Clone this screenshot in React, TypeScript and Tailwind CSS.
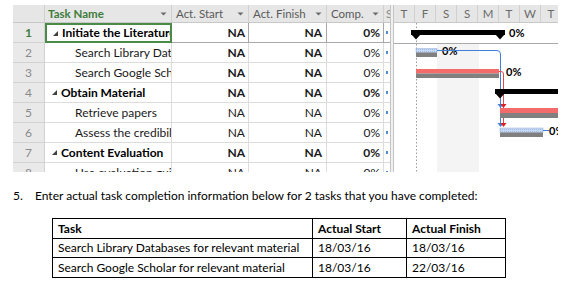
import React from "react";

const FONT = "font-['Lato','Liberation_Sans',sans-serif]";

type Row = { n: number; name: string; sub?: boolean; bold?: boolean; naBold?: boolean };
const rows: Row[] = [
  { n: 1, name: "Initiate the Literature Review", bold: true, naBold: true },
  { n: 2, name: "Search Library Databases", sub: true, naBold: true },
  { n: 3, name: "Search Google Scholar", sub: true, naBold: true },
  { n: 4, name: "Obtain Material", bold: true, naBold: true },
  { n: 5, name: "Retrieve papers", sub: true },
  { n: 6, name: "Assess the credibility", sub: true },
  { n: 7, name: "Content Evaluation", bold: true, naBold: true },
  { n: 8, name: "Use evaluation guide", sub: true },
];

const days = ["T", "F", "S", "S", "M", "T", "W", "T"];

function Caret() {
  return (
    <svg width="7" height="4" viewBox="0 0 7 4" className="shrink-0">
      <path d="M0.5 0.5 L6.5 0.5 L3.5 3.5 Z" fill="#6b6b6b" />
    </svg>
  );
}

function Collapse() {
  return (
    <svg width="5" height="5" viewBox="0 0 5 5" className="shrink-0">
      <path d="M5 0 L5 5 L0 5 Z" fill="#404040" />
    </svg>
  );
}

function Timeline() {
  // coordinates relative to x=394, y=23
  const X = (x: number) => x - 394;
  const Y = (y: number) => y - 23;
  return (
    <svg width="164" height="149" className="block shrink-0">
      <defs>
        <pattern id="dots" width="2" height="2" patternUnits="userSpaceOnUse">
          <rect width="2" height="2" fill="#c9daf2" />
          <rect width="1" height="1" fill="#9dbbe6" />
        </pattern>
      </defs>
      <rect x={X(437)} y={Y(44)} width="42" height="130" fill="#f4f4f4" />
      <line x1="0" x2="164" y1={Y(43.5)} y2={Y(43.5)} stroke="#a9a9a9" strokeWidth="1" />
      <line x1={X(416.5)} x2={X(416.5)} y1="0" y2="149" stroke="#9a9a9a" strokeWidth="1" strokeDasharray="1.5 2" />

      {/* row 1 summary */}
      <rect x={X(411)} y={Y(30)} width={94} height={5} fill="#000" />
      <path d={`M${X(411)} ${Y(34)} L${X(421)} ${Y(34)} L${X(416)} ${Y(39.5)} Z`} fill="#000" />
      <path d={`M${X(495)} ${Y(34)} L${X(505)} ${Y(34)} L${X(500)} ${Y(39.5)} Z`} fill="#000" />
      <text x={X(509)} y={Y(37)} fontSize="11" fontWeight="700" fill="#000" fontFamily="Lato, sans-serif">0%</text>

      {/* links */}
      <path d={`M${X(437)} ${Y(50.5)} L${X(497)} ${Y(50.5)} Q${X(500.5)} ${Y(50.5)} ${X(500.5)} ${Y(54)} L${X(500.5)} ${Y(126)}`} fill="none" stroke="#3f7fd8" strokeWidth="1" />
      <path d={`M${X(499)} ${Y(71.5)} L${X(501)} ${Y(71.5)} Q${X(503.5)} ${Y(71.5)} ${X(503.5)} ${Y(74)} L${X(503.5)} ${Y(126)}`} fill="none" stroke="#e24848" strokeWidth="1" />

      {/* row 2 */}
      <text x={X(442)} y={Y(55)} fontSize="11" fontWeight="700" fill="#000" fontFamily="Lato, sans-serif">0%</text>
      <line x1={X(437)} x2={X(460)} y1={Y(50.5)} y2={Y(50.5)} stroke="#3f7fd8" strokeWidth="1" />
      <rect x={X(416)} y={Y(48.5)} width={21} height={4} fill="url(#dots)" stroke="#8fb0e0" strokeWidth="0.5" />
      <rect x={X(416)} y={Y(52.5)} width={21} height={4.5} fill="#808080" />

      {/* row 3 */}
      <rect x={X(416)} y={Y(69)} width={83} height={4.5} fill="#f46b6b" />
      <rect x={X(416)} y={Y(73.5)} width={83} height={4.5} fill="#808080" />
      <text x={X(506)} y={Y(76)} fontSize="11" fontWeight="700" fill="#000" fontFamily="Lato, sans-serif">0%</text>

      {/* row 4 summary */}
      <rect x={X(495)} y={Y(89)} width={80} height={5} fill="#000" />
      <path d={`M${X(495)} ${Y(93)} L${X(505)} ${Y(93)} L${X(500)} ${Y(98.5)} Z`} fill="#000" />

      {/* arrows row 5 */}
      <path d={`M${X(497.5)} ${Y(104)} L${X(503.5)} ${Y(104)} L${X(500.5)} ${Y(108)} Z`} fill="#3f7fd8" />
      <path d={`M${X(500.5)} ${Y(104)} L${X(506.5)} ${Y(104)} L${X(503.5)} ${Y(108)} Z`} fill="#e02020" />
      <rect x={X(500)} y={Y(108)} width={70} height={5} fill="#f46b6b" />
      <rect x={X(500)} y={Y(113)} width={70} height={5} fill="#808080" />

      {/* arrows row 6 */}
      <path d={`M${X(497.5)} ${Y(123)} L${X(503.5)} ${Y(123)} L${X(500.5)} ${Y(127)} Z`} fill="#3f7fd8" />
      <path d={`M${X(500.5)} ${Y(123)} L${X(506.5)} ${Y(123)} L${X(503.5)} ${Y(127)} Z`} fill="#e02020" />
      <rect x={X(500)} y={Y(128)} width={43} height={4.5} fill="url(#dots)" stroke="#8fb0e0" strokeWidth="0.5" />
      <rect x={X(500)} y={Y(132.5)} width={43} height={4.5} fill="#808080" />
      <line x1={X(543)} x2={X(549)} y1={Y(130.5)} y2={Y(130.5)} stroke="#3f7fd8" strokeWidth="1" />
      <text x={X(549)} y={Y(135)} fontSize="11" fontWeight="700" fill="#000" fontFamily="Lato, sans-serif">0%</text>
    </svg>
  );
}

export default function App() {
  return (
    <div className={`w-[574px] h-[294px] bg-white overflow-hidden pt-[5px] ${FONT}`}>
      {/* Gantt screenshot */}
      <div className="ml-[13px] w-[545px] h-[167px] overflow-hidden flex items-start text-[12px] leading-none">
        {/* sheet */}
        <div className="w-[377px] shrink-0 flex flex-col">
          <div className="h-[18px] shrink-0 flex bg-[#e6e6e6] border-b border-[#c8c8c8] text-[11.5px]">
            <div className="w-[32px] shrink-0 border-r border-[#d0d0d0]" />
            <div className="w-[127px] shrink-0 border-r border-[#d0d0d0] flex items-center justify-between pl-[3px] pr-[4px]">
              <span className="font-bold text-[#3e7c3b]">Task Name</span>
              <Caret />
            </div>
            <div className="w-[77px] shrink-0 border-r border-[#d0d0d0] flex items-center justify-between pl-[4px] pr-[4px] text-[#5a5a5a]">
              <span>Act. Start</span>
              <Caret />
            </div>
            <div className="w-[78px] shrink-0 border-r border-[#d0d0d0] flex items-center justify-between pl-[4px] pr-[4px] text-[#5a5a5a]">
              <span>Act. Finish</span>
              <Caret />
            </div>
            <div className="w-[57px] shrink-0 border-r border-[#d0d0d0] flex items-center justify-between pl-[4px] pr-[4px] text-[#5a5a5a]">
              <span>Comp.</span>
              <Caret />
            </div>
            <div className="w-[6px] shrink-0 overflow-hidden flex items-center text-[#8a8a8a]">
              <span className="pl-[2px]">S</span>
            </div>
          </div>
          {rows.map((r) => {
            const first = r.n === 1;
            const rowBorder = first ? "border-[#a8a8a8]" : "border-[#dcdcdc]";
            return (
              <div key={r.n} className="h-[20px] shrink-0 flex">
                <div
                  className={`w-[32px] shrink-0 bg-[#e9e9e9] border-r border-b border-[#d2d2d2] flex items-center justify-center ${
                    first ? "font-bold text-[#3e7c3b]" : "text-[#8a8a8a]"
                  }`}
                >
                  {r.n}
                </div>
                <div
                  className={`w-[127px] shrink-0 flex items-center overflow-hidden whitespace-nowrap ${
                    first ? "border-2 border-[#4b8a47]" : `border-r border-b ${rowBorder}`
                  } ${r.sub ? "pl-[30px]" : first ? "pl-[6px]" : "pl-[7px]"} ${r.bold ? "font-bold text-black" : "text-[#1a1a1a]"}`}
                >
                  {!r.sub && (
                    <span className="mr-[4px] flex">
                      <Collapse />
                    </span>
                  )}
                  <span>{r.name}</span>
                </div>
                <div className={`w-[77px] shrink-0 border-r border-b ${rowBorder} flex items-center justify-end pr-[3px] ${r.naBold ? "font-bold" : ""} text-[#1a1a1a]`}>
                  NA
                </div>
                <div className={`w-[78px] shrink-0 border-r border-b ${rowBorder} flex items-center justify-end pr-[4px] ${r.naBold ? "font-bold" : ""} text-[#1a1a1a]`}>
                  NA
                </div>
                <div className={`w-[57px] shrink-0 border-r border-b ${rowBorder} flex items-center justify-end pr-[3px] ${r.bold ? "font-bold" : ""} text-[#1a1a1a]`}>
                  0%
                </div>
                <div className={`w-[6px] shrink-0 border-b ${rowBorder} flex items-center pl-[2px]`}>
                  <span className="w-[2px] h-[3px] bg-[#4f8fd6]" />
                </div>
              </div>
            );
          })}
        </div>
        {/* split bar */}
        <div className="w-[4px] h-[167px] shrink-0 bg-[#f0f0f0] border-l border-r border-[#c4c4c4]" />
        {/* timeline */}
        <div className="w-[164px] shrink-0 flex flex-col">
          <div className="h-[18px] shrink-0 flex bg-[#e6e6e6] border-b border-[#c8c8c8] text-[#6a6a6a] text-[11.5px]">
            {days.map((d, i) => (
              <div key={i} className="w-[21px] shrink-0 border-r border-[#d0d0d0] flex items-center justify-center">
                {d}
              </div>
            ))}
          </div>
          <Timeline />
        </div>
      </div>

      {/* Document part */}
      <div className="mt-[18px] flex items-center text-[12px] text-black leading-none">
        <span className="w-[22px] pl-[13px] shrink-0">5.</span>
        <span className="ml-[13px]">Enter actual task completion information below for 2 tasks that you have completed:</span>
      </div>

      <div className="ml-[52px] mt-[16px] w-[454px] border border-black text-[12px] leading-none text-black">
        <div className="grid grid-cols-[260px_94px_1fr] h-[20px] border-b border-black font-bold">
          <div className="pl-[5px] flex items-center border-r border-black">Task</div>
          <div className="pl-[5px] flex items-center border-r border-black">Actual Start</div>
          <div className="pl-[5px] flex items-center">Actual Finish</div>
        </div>
        <div className="grid grid-cols-[260px_94px_1fr] h-[19px] border-b border-black">
          <div className="pl-[5px] flex items-center border-r border-black">Search Library Databases for relevant material</div>
          <div className="pl-[5px] flex items-center border-r border-black">18/03/16</div>
          <div className="pl-[5px] flex items-center">18/03/16</div>
        </div>
        <div className="grid grid-cols-[260px_94px_1fr] h-[19px]">
          <div className="pl-[5px] flex items-center border-r border-black">Search Google Scholar for relevant material</div>
          <div className="pl-[5px] flex items-center border-r border-black">18/03/16</div>
          <div className="pl-[5px] flex items-center">22/03/16</div>
        </div>
      </div>
    </div>
  );
}
